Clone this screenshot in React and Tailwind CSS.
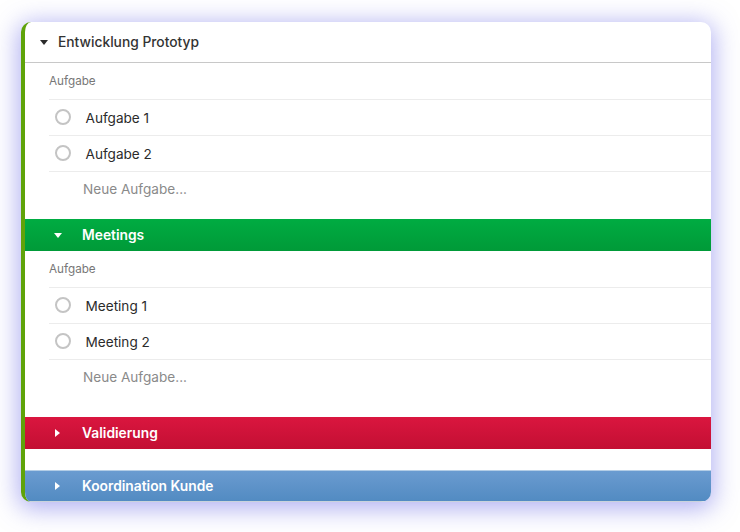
function Band({ title, open, className }) {
    return (
        <div className={`h-8 flex items-center text-white font-semibold text-[13.8px] ${className}`}>
            <div className="w-[57px] pl-[29px]">
                {open ? <Caret className="text-white" /> : <CaretSide />}
            </div>
            {title}
        </div>
    );
}

function Caret({ className }) {
    return <div className={`w-0 h-0 border-x-4 border-x-transparent border-t-[5px] border-t-current ${className}`}></div>;
}

function CaretSide() {
    return <div className="w-0 h-0 ml-[1px] border-y-4 border-y-transparent border-l-[5px] border-l-current"></div>;
}

function TaskList({ tasks }) {
    return (
        <div className="pl-6">
            <div className="h-[37px] pt-[2px] flex items-center text-[11.7px] text-[#777777] border-b border-[#ececec]">Aufgabe</div>
            {tasks.map(task => (
                <div key={task} className="h-9 flex items-center border-b border-[#ececec] text-[13.6px] text-[#2b2b2b]">
                    <div className="w-4 h-4 ml-[6px] mb-px rounded-full border-2 border-[#c4c4c4]"></div>
                    <span className="ml-[14.5px] pt-[2px]">{task}</span>
                </div>
            ))}
            <div className="h-9 pb-[2px] flex items-center pl-[34px] text-[13.6px] text-[#8a8a8a]">Neue Aufgabe...</div>
        </div>
    );
}

export default function App() {
    return (
        <div className="w-[740px] h-[532px] bg-white pt-[22px] pl-[21px] font-['Inter',sans-serif]">
            <div className="w-[690px] h-[480px] bg-white rounded-[10px] overflow-hidden border-l-4 border-[#5fa30a] shadow-[0_4px_24px_3px_rgba(100,100,230,0.5)]">
                {/* Header */}
                <div className="h-[41px] flex items-center border-b border-[#c8c8c8] text-[13.8px] font-medium text-[#333333]">
                    <Caret className="ml-[15px] mr-[10px] text-[#2b2b2b]" />
                    <span>Entwicklung Prototyp</span>
                </div>
                <TaskList tasks={['Aufgabe 1', 'Aufgabe 2']} />
                <div className="h-[11px]"></div>
                <Band title="Meetings" open className="bg-gradient-to-b from-[#00ac42] to-[#009a38]" />
                <TaskList tasks={['Meeting 1', 'Meeting 2']} />
                <div className="h-[21px]"></div>
                <Band title="Validierung" className="bg-gradient-to-b from-[#da163f] to-[#c30f33]" />
                <div className="h-[21px]"></div>
                <Band title="Koordination Kunde" className="bg-gradient-to-b from-[#6a9bd0] to-[#528bc2] border-t border-t-[#b3cde6] border-b border-b-[#c9d3dc]" />
            </div>
        </div>
    );
}
